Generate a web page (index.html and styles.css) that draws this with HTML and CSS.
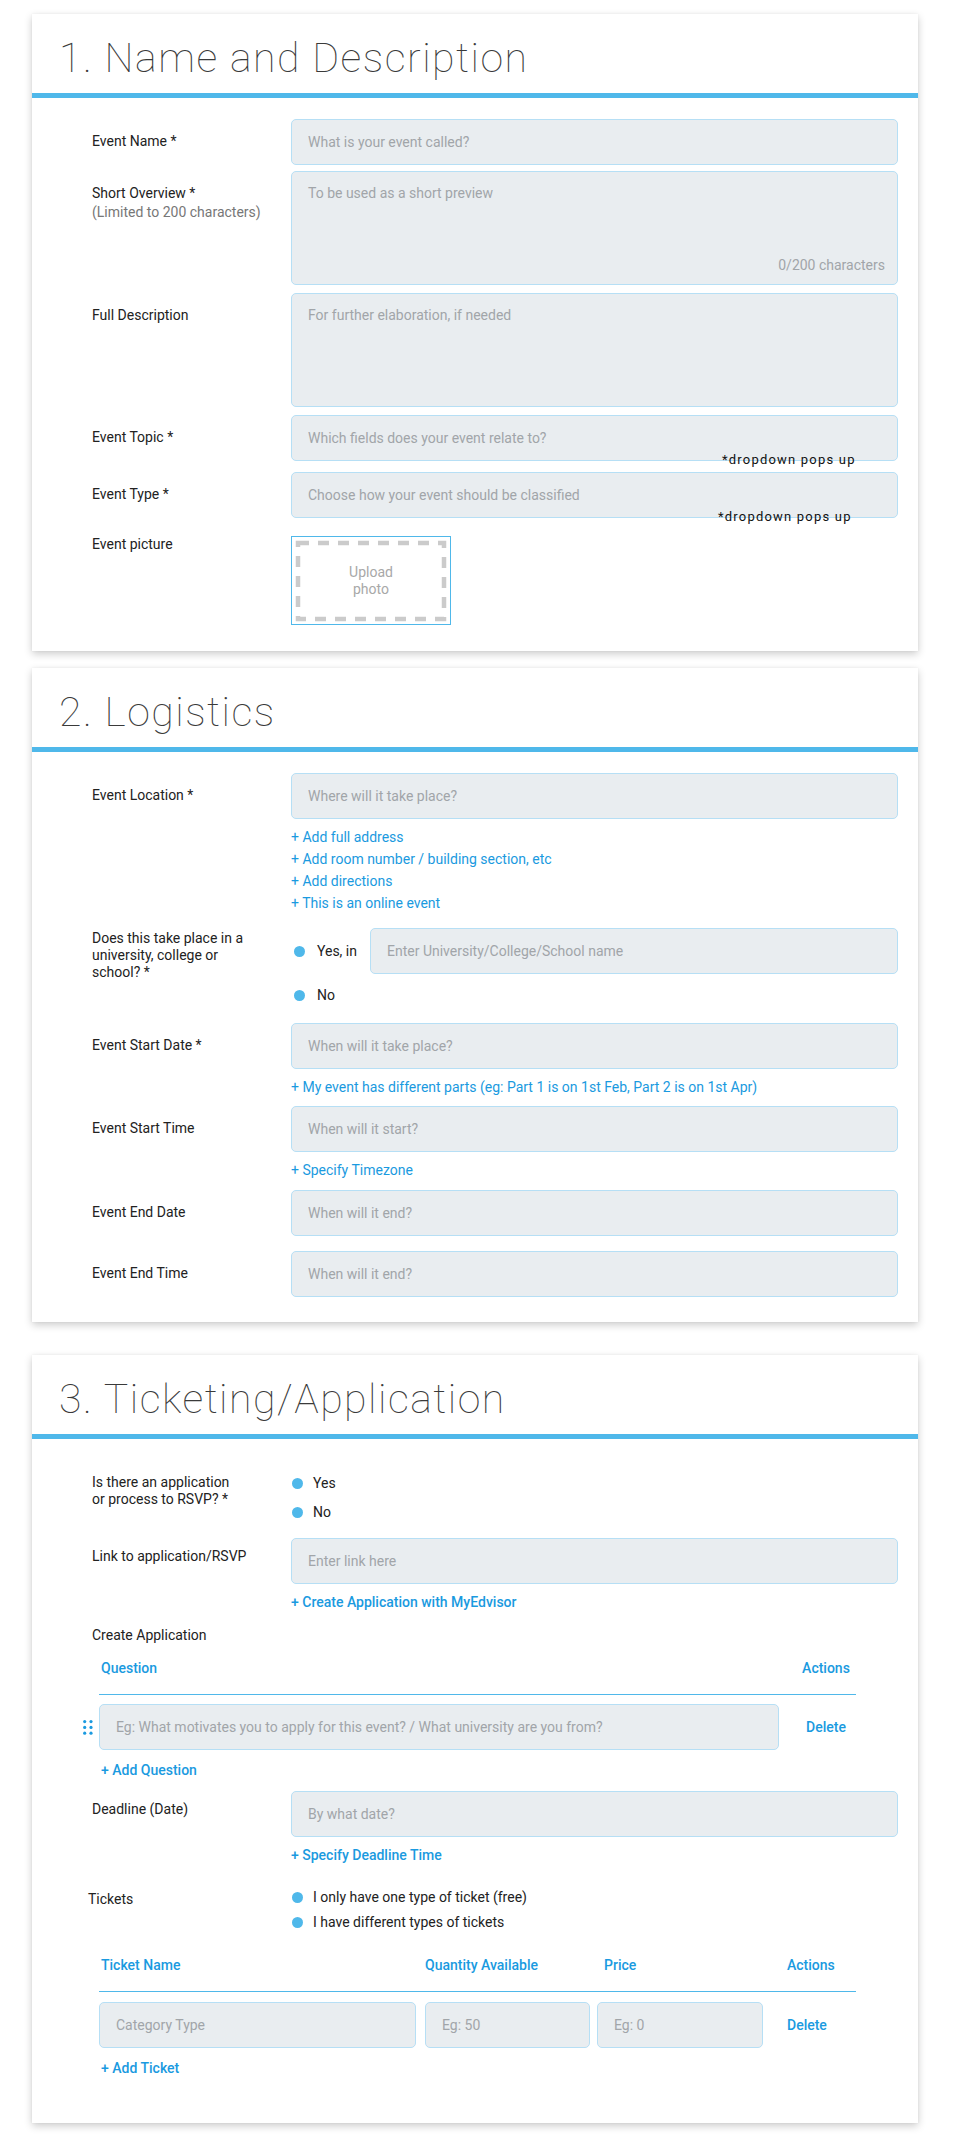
FILE: index.html
```html
<!DOCTYPE html>
<html lang="en">
<head>
    <meta charset="UTF-8">
    <meta name="viewport" content="width=device-width, initial-scale=1.0">
    <title>Create Event</title>
    <link rel="stylesheet" href="styles.css">
</head>
<body>
    <!-- 1. Name and Description -->
    <section class="card">
        <div class="card-head"><h2>1. Name and Description</h2></div>
        <div class="card-body">
            <div class="row">
                <label class="label">Event Name *</label>
                <div class="field"><input class="input" placeholder="What is your event called?"></div>
            </div>
            <div class="row mt-6">
                <label class="label">Short Overview *<span class="hint">(Limited to 200 characters)</span></label>
                <div class="field">
                    <textarea class="input" placeholder="To be used as a short preview"></textarea>
                    <span class="counter">0/200 characters</span>
                </div>
            </div>
            <div class="row">
                <label class="label">Full Description</label>
                <div class="field"><textarea class="input" placeholder="For further elaboration, if needed"></textarea></div>
            </div>
            <div class="row">
                <label class="label">Event Topic *</label>
                <div class="field">
                    <input class="input" placeholder="Which fields does your event relate to?">
                    <span class="note">*dropdown pops up</span>
                </div>
            </div>
            <div class="row mt-11">
                <label class="label">Event Type *</label>
                <div class="field">
                    <input class="input" placeholder="Choose how your event should be classified">
                    <span class="note note-alt">*dropdown pops up</span>
                </div>
            </div>
            <div class="row mt-18">
                <label class="label flush">Event picture</label>
                <div class="field">
                    <div class="upload">
                        <svg class="upload-dash" width="158" height="87" viewBox="0 0 158 87">
                            <rect x="6" y="6" width="146" height="76" fill="none" stroke="#cbcbcb" stroke-width="4.5" stroke-dasharray="11 9"/>
                        </svg>
                        <span>Upload<br>photo</span>
                    </div>
                </div>
            </div>
        </div>
    </section>

    <!-- 2. Logistics -->
    <section class="card">
        <div class="card-head"><h2>2. Logistics</h2></div>
        <div class="card-body body-2">
            <div class="row">
                <label class="label">Event Location *</label>
                <div class="field">
                    <input class="input" placeholder="Where will it take place?">
                    <div class="links">
                        <a class="link" href="#">+ Add full address</a>
                        <a class="link" href="#">+ Add room number / building section, etc</a>
                        <a class="link" href="#">+ Add directions</a>
                        <a class="link" href="#">+ This is an online event</a>
                    </div>
                </div>
            </div>
            <div class="row mt-14">
                <label class="label top-2">Does this take place in a<br>university, college or<br>school? *</label>
                <div class="field">
                    <div class="choice">
                        <span class="radio">Yes, in</span>
                        <input class="input" placeholder="Enter University/College/School name">
                    </div>
                    <span class="radio radio-no">No</span>
                </div>
            </div>
            <div class="row mt-19">
                <label class="label">Event Start Date *</label>
                <div class="field">
                    <input class="input" placeholder="When will it take place?">
                    <div class="links">
                        <a class="link" href="#">+ My event has different parts (eg: Part 1 is on 1st Feb, Part 2 is on 1st Apr)</a>
                    </div>
                </div>
            </div>
            <div class="row">
                <label class="label">Event Start Time</label>
                <div class="field">
                    <input class="input" placeholder="When will it start?">
                    <div class="links">
                        <a class="link" href="#">+ Specify Timezone</a>
                    </div>
                </div>
            </div>
            <div class="row mt-9">
                <label class="label">Event End Date</label>
                <div class="field"><input class="input" placeholder="When will it end?"></div>
            </div>
            <div class="row mt-15">
                <label class="label">Event End Time</label>
                <div class="field"><input class="input" placeholder="When will it end?"></div>
            </div>
        </div>
    </section>

    <!-- 3. Ticketing/Application -->
    <section class="card card-last">
        <div class="card-head"><h2>3. Ticketing/Application</h2></div>
        <div class="card-body body-3">
            <div class="row">
                <label class="label">Is there an application<br>or process to RSVP? *</label>
                <div class="field radios">
                    <span class="radio">Yes</span>
                    <span class="radio">No</span>
                </div>
            </div>
            <div class="row mt-17">
                <label class="label top-10">Link to application/RSVP</label>
                <div class="field">
                    <input class="input" placeholder="Enter link here">
                    <div class="links">
                        <a class="link strong" href="#">+ Create Application with MyEdvisor</a>
                    </div>
                </div>
            </div>
            <div class="row mt-14">
                <label class="label flush">Create Application</label>
            </div>

            <div class="table qtable">
                <div class="thead">
                    <span class="th-first">Question</span>
                    <span class="center">Actions</span>
                </div>
                <div class="trow">
                    <div class="qcell">
                        <svg class="handle" width="10" height="15" viewBox="0 0 10 15">
                            <circle cx="1.7" cy="1.6" r="1.6"/><circle cx="8" cy="1.6" r="1.6"/>
                            <circle cx="1.7" cy="7.4" r="1.6"/><circle cx="8" cy="7.4" r="1.6"/>
                            <circle cx="1.7" cy="13.2" r="1.6"/><circle cx="8" cy="13.2" r="1.6"/>
                        </svg>
                        <input class="input" placeholder="Eg: What motivates you to apply for this event? / What university are you from?">
                    </div>
                    <a class="action center" href="#">Delete</a>
                </div>
                <a class="link add" href="#">+ Add Question</a>
            </div>

            <div class="row mt-10">
                <label class="label top-10">Deadline (Date)</label>
                <div class="field">
                    <input class="input" placeholder="By what date?">
                    <div class="links">
                        <a class="link strong" href="#">+ Specify Deadline Time</a>
                    </div>
                </div>
            </div>
            <div class="row mt-19">
                <label class="label top-6 nudge">Tickets</label>
                <div class="field radios radios-tight">
                    <span class="radio">I only have one type of ticket (free)</span>
                    <span class="radio">I have different types of tickets</span>
                </div>
            </div>

            <div class="table ttable">
                <div class="thead">
                    <span class="th-first">Ticket Name</span>
                    <span>Quantity Available</span>
                    <span class="th-price">Price</span>
                    <span>Actions</span>
                </div>
                <div class="trow">
                    <div><input class="input w-name" placeholder="Category Type"></div>
                    <div><input class="input w-qty" placeholder="Eg: 50"></div>
                    <div><input class="input w-price" placeholder="Eg: 0"></div>
                    <a class="action" href="#">Delete</a>
                </div>
                <a class="link add" href="#">+ Add Ticket</a>
            </div>
        </div>
    </section>
</body>
</html>
```

FILE: styles.css
```css
body { margin: 0; padding: 14px 0 19px; background: #fff; color: #222; font-family: Roboto, "Liberation Sans", sans-serif; font-size: 14px; }

.card { width: 886px; margin-left: 32px; background: #fff; box-shadow: 0 3px 8px rgba(0,0,0,0.2), 0 0 2px rgba(0,0,0,0.06); }
.card + .card { margin-top: 17px; }
.card-last { margin-top: 33px !important; }
.card-head { padding: 19px 27px 10px; border-bottom: 5px solid #4fb8ea; }
.card-head h2 { margin: 0; font-size: 41px; font-weight: 100; line-height: 50px; letter-spacing: 1.5px; color: #3a3a3a; }
.card-body { padding: 21px 20px 26px 60px; }
.body-2 { padding-bottom: 25px; }
.body-3 { padding-bottom: 44px; }

/* form rows */
.row { display: grid; grid-template-columns: 199px 1fr; margin-top: 8px; }
.row:first-child { margin-top: 0; }
.mt-6 { margin-top: 6px; }
.mt-9 { margin-top: 9px; }
.mt-10 { margin-top: 10px; }
.mt-11 { margin-top: 11px; }
.mt-14 { margin-top: 14px; }
.mt-15 { margin-top: 15px; }
.mt-17 { margin-top: 17px; }
.mt-18 { margin-top: 18px; }
.mt-19 { margin-top: 19px; }

.label { display: block; padding: 14px 16px 0 0; line-height: 17px; color: #222; }
.label.flush { padding-top: 0; }
.label.top-2 { padding-top: 2px; }
.label.top-6 { padding-top: 6px; }
.label.top-10 { padding-top: 10px; }
.label.nudge { margin-left: -4px; }
.hint { display: block; margin-top: 2px; color: #777; }

.field { position: relative; min-width: 0; }
.input { display: block; width: 100%; height: 46px; box-sizing: border-box; padding: 0 16px; background: #e9edf0; border: 1px solid #b6dff5; border-radius: 5px; font-family: Roboto, "Liberation Sans", sans-serif; font-size: 14px; color: #333; outline: none; }
.input::placeholder { color: #a1a5a9; }
textarea.input { height: 114px; padding-top: 13px; line-height: 17px; resize: none; }
.counter { position: absolute; right: 13px; bottom: 11px; line-height: 17px; color: #a1a5a9; }
.note { position: absolute; left: 431px; top: 37px; font-size: 13px; line-height: 15px; letter-spacing: 1.2px; color: #111; }
.note-alt { left: 427px; }

.upload { position: relative; width: 160px; height: 89px; box-sizing: border-box; border: 1px solid #4fb8ea; display: flex; align-items: center; justify-content: center; text-align: center; line-height: 17px; color: #a8a8a8; }
.upload-dash { position: absolute; left: 0; top: 0; }

/* links */
.links { margin-top: 7px; }
.link { display: block; line-height: 22px; color: #1a9ae0; text-decoration: none; }
.link.strong { font-weight: 500; }

/* radios */
.radio { display: flex; align-items: center; gap: 12px; line-height: 17px; color: #222; }
.radio::before { content: ""; width: 11px; height: 11px; margin-left: 3px; border-radius: 50%; background: #4fb8ea; flex: none; }
.radio-no { margin-top: 13px; }
.choice { display: flex; align-items: center; }
.choice .input { flex: 1; margin-left: 13px; }
.radios { display: flex; flex-direction: column; gap: 12px; padding-top: 15px; }
.radios .radio { gap: 10px; }
.radios .radio::before { margin-left: 1px; }
.radios-tight { gap: 8px; padding-top: 4px; }

/* tables */
.table { width: 757px; margin-left: 7px; }
.qtable { margin-top: 8px; }
.ttable { margin-top: 26px; }
.thead { display: grid; border-bottom: 1px solid #4fb8ea; line-height: 17px; font-weight: 500; color: #1a9ae0; }
.qtable .thead { grid-template-columns: 702px 50px; padding: 8px 0 17px; }
.ttable .thead { grid-template-columns: 326px 172px 190px 1fr; padding: 0 0 17px; }
.th-first { padding-left: 2px; }
.th-price { padding-left: 7px; }
.center { text-align: center; }
.trow { display: grid; align-items: center; margin-top: 9px; }
.qtable .trow { grid-template-columns: 702px 50px; }
.ttable .trow { grid-template-columns: 326px 172px 190px 1fr; margin-top: 10px; }
.qcell { display: flex; align-items: center; }
.qcell .input { width: 680px; }
.handle { margin-left: -16px; margin-right: 6px; fill: #1a9ae0; flex: none; }
.action { font-weight: 500; color: #1a9ae0; text-decoration: none; line-height: 17px; }
.w-name { width: 317px; }
.w-qty { width: 165px; }
.w-price { width: 166px; }
.add { margin: 9px 0 0 2px; font-weight: 500; }
```
